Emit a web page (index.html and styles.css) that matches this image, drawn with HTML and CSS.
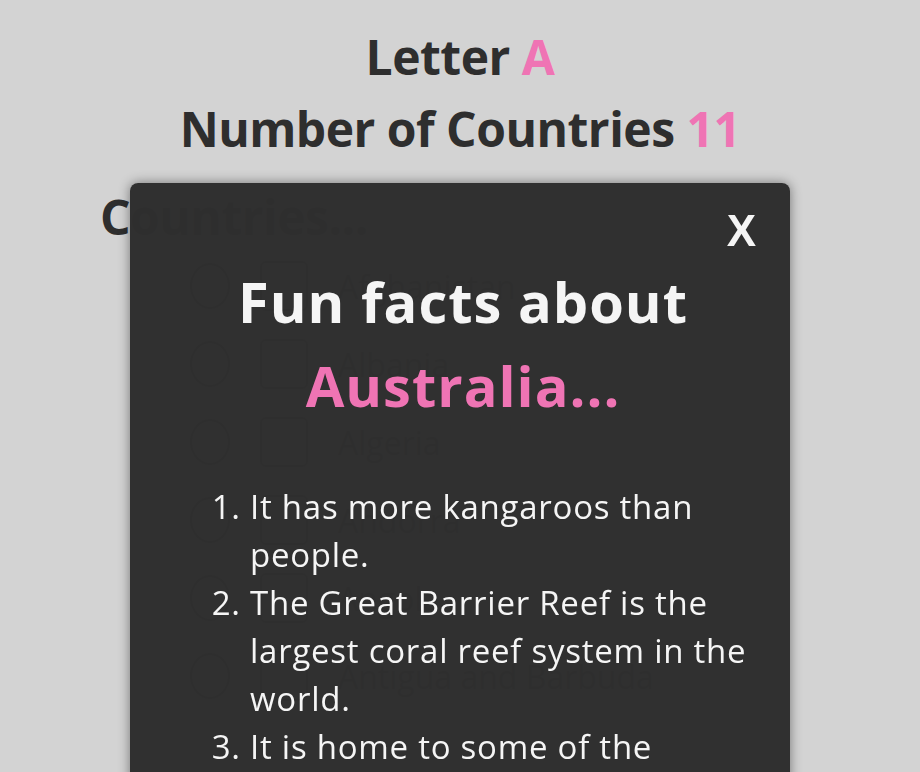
FILE: index.html
```html
<!DOCTYPE html>
<html lang="en">
<head>
<meta charset="utf-8">
<title>Countries by letter</title>
<link rel="stylesheet" href="styles.css">
</head>
<body>
<main class="page">
  <header class="summary">
    <h1 class="summary-line">Letter <span class="accent">A</span></h1>
    <h1 class="summary-line">Number of Countries <span class="accent">11</span></h1>
  </header>
  <section class="countries">
    <h2 class="countries-title">Countries...</h2>
    <ul class="country-list">
      <li class="country"><span class="c-icon"></span><span class="c-flag"></span><span class="c-name">Afghanistan</span></li>
      <li class="country"><span class="c-icon"></span><span class="c-flag"></span><span class="c-name">Albania</span></li>
      <li class="country"><span class="c-icon"></span><span class="c-flag"></span><span class="c-name">Algeria</span></li>
      <li class="country"><span class="c-icon"></span><span class="c-flag"></span><span class="c-name">Andorra</span></li>
      <li class="country"><span class="c-icon"></span><span class="c-flag"></span><span class="c-name">Angola</span></li>
      <li class="country"><span class="c-icon"></span><span class="c-flag"></span><span class="c-name">Antigua and Barbuda</span></li>
    </ul>
  </section>
</main>

<div class="modal">
  <div class="modal-top"><button class="close">X</button></div>
  <h2 class="modal-title">Fun facts about <span class="modal-country">Australia...</span></h2>
  <ol class="facts">
    <li>It has more kangaroos than people.</li>
    <li>The Great Barrier Reef is the largest coral reef system in the world.</li>
    <li>It is home to some of the world's most venomous snakes.</li>
  </ol>
</div>
</body>
</html>
```

FILE: styles.css
```css
* { box-sizing: border-box; }

html, body {
  margin: 0;
  height: 100%;
  overflow: hidden;
}

body {
  background: #d3d3d3;
  color: #2e2e2e;
  font-family: "Open Sans", "DejaVu Sans", sans-serif;
}

.page {
  padding-top: 21px;
}

.summary {
  display: flex;
  flex-direction: column;
  align-items: center;
}

.summary-line {
  margin: 0;
  font-size: 48px;
  line-height: 72px;
  font-weight: 700;
  letter-spacing: -0.5px;
}

.accent { color: #ef74b4; }

.countries {
  padding: 16px 0 0 100px;
}

.countries-title {
  margin: 0;
  font-size: 48px;
  line-height: 72px;
  font-weight: 700;
  letter-spacing: -0.5px;
}

.country-list {
  list-style: none;
  margin: 8px 0 0;
  padding: 0 0 0 90px;
  display: flex;
  flex-direction: column;
  gap: 28px;
}

.country {
  display: flex;
  align-items: center;
  gap: 30px;
  height: 50px;
}

.c-icon {
  width: 40px;
  height: 46px;
  border: 2px solid #2e2e2e;
  border-radius: 50%;
}

.c-flag {
  width: 48px;
  height: 50px;
  border: 2px solid #2e2e2e;
  border-radius: 6px;
}

.c-name {
  font-size: 32px;
}

.modal {
  position: fixed;
  top: 183px;
  left: 130px;
  width: 660px;
  height: 700px;
  background: rgba(46, 46, 46, 0.993);
  border-radius: 8px;
  box-shadow: 0 0 12px rgba(0, 0, 0, 0.45);
  padding: 26px 34px 0 40px;
  color: #f5f5f5;
}

.modal-top {
  display: flex;
  justify-content: flex-end;
}

.close {
  background: none;
  border: 0;
  padding: 0;
  color: #f5f5f5;
  font-family: "Liberation Sans", Arial, sans-serif;
  font-weight: 700;
  font-size: 44px;
  line-height: 44px;
  cursor: pointer;
}

.modal-title {
  margin: 6px 0 0;
  text-align: center;
  font-size: 56px;
  line-height: 84px;
  font-weight: 700;
  letter-spacing: 1px;
}

.modal-country {
  display: block;
  color: #ef74b4;
}

.facts {
  margin: 56px 0 0;
  padding: 0 6px 0 80px;
  font-size: 33px;
  line-height: 48px;
  letter-spacing: 0.75px;
}
```
